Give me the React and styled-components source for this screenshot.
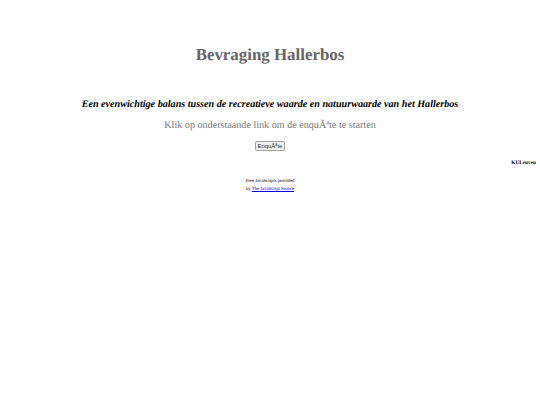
import React from 'react';
import styled, { createGlobalStyle } from 'styled-components';

const GlobalStyle = createGlobalStyle`
  html, body {
    margin: 0;
    background: #fff;
  }
`;

const App = () => (
  <>
    <GlobalStyle />
    <Page>
      <Title>Bevraging Hallerbos</Title>
      <Subtitle>Een evenwichtige balans tussen de recreatieve waarde en natuurwaarde van het Hallerbos</Subtitle>
      <Intro>Klik op onderstaande link om de enquÃªte te starten</Intro>
      <ButtonRow>
        <SurveyButton type="button">EnquÃªte</SurveyButton>
      </ButtonRow>
      <Credit>KULeuven</Credit>
      <Source>
        <div>Free JavaScripts provided</div>
        <div>
          by <a href="#source">The JavaScript Source</a>
        </div>
      </Source>
    </Page>
  </>
);

const Page = styled.div`
  width: 540px;
  height: 405px;
  overflow: hidden;
  padding: 45px 4px 0;
  box-sizing: border-box;
  font-family: "Liberation Serif", "Times New Roman", serif;
  text-rendering: geometricPrecision;
  display: flex;
  flex-direction: column;
`;

const Title = styled.h1`
  margin: 0;
  font-size: 16.9px;
  line-height: 20px;
  font-weight: bold;
  text-align: center;
  color: #666;
`;

const Subtitle = styled.h2`
  margin: 33px 0 0;
  font-size: 10.15px;
  line-height: 13px;
  font-weight: bold;
  font-style: italic;
  text-align: center;
  color: #000;
`;

const Intro = styled.p`
  margin: 8px 0 0;
  font-size: 10.15px;
  line-height: 13px;
  text-align: center;
  color: #777;
`;

const ButtonRow = styled.div`
  display: flex;
  justify-content: center;
  margin-top: 9px;
`;

const SurveyButton = styled.button`
  height: 10px;
  width: 30px;
  padding: 0;
  font-family: "Liberation Sans", Arial, sans-serif;
  font-size: 5.9px;
  line-height: 8px;
  color: #333;
  background: #efefef;
  border: 1px solid #a3a3a3;
  border-radius: 2px;
`;

const Credit = styled.div`
  margin-top: 8px;
  height: 8px;
  line-height: 8px;
  font-size: 5.3px;
  font-weight: bold;
  text-align: right;
  color: #000;
`;

const Source = styled.div`
  margin-top: 11px;
  font-size: 4.7px;
  line-height: 7.5px;
  text-align: center;
  color: #000;

  a {
    color: #00e;
  }
`;

export default App;
